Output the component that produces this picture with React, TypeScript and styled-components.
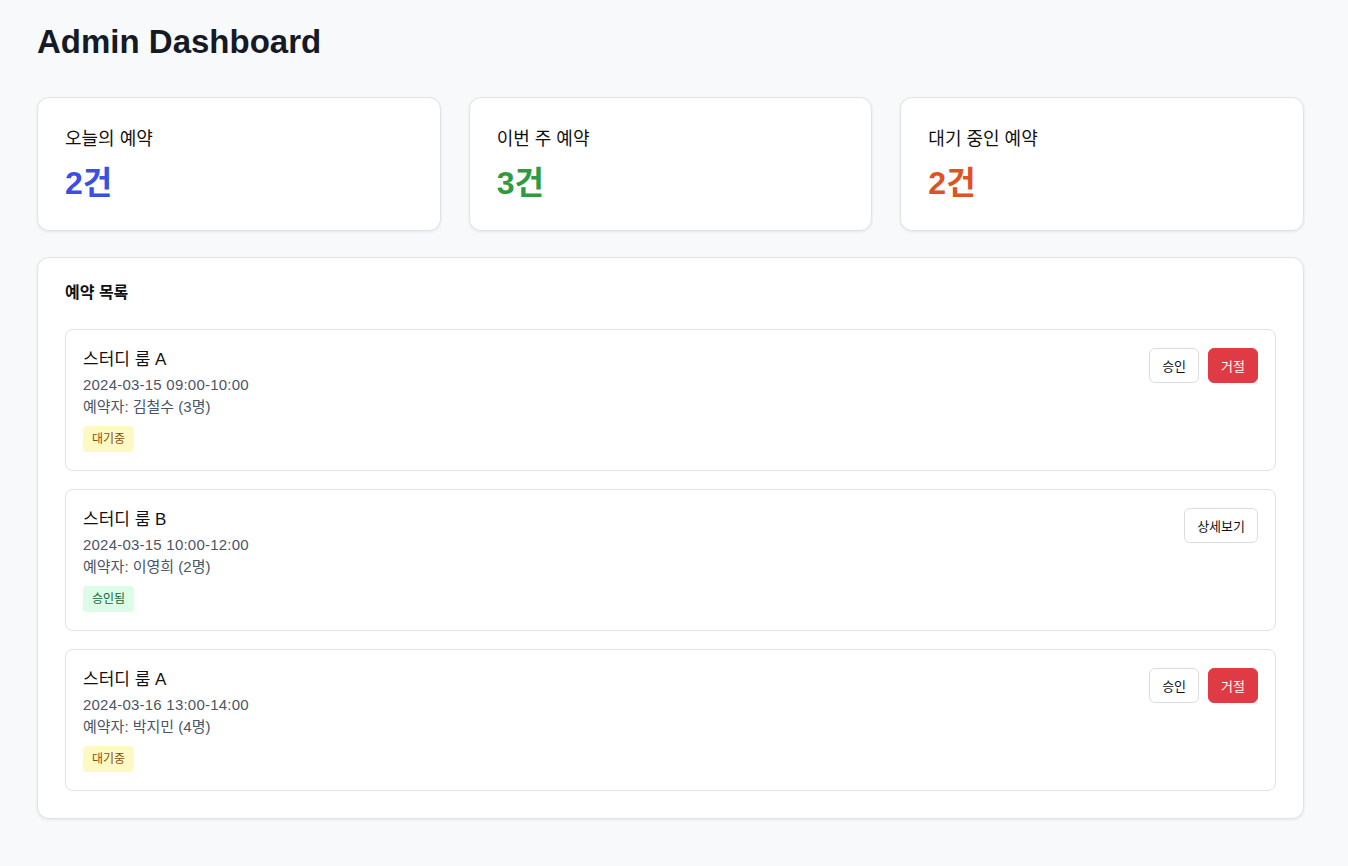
import React from "react";
import styled, { createGlobalStyle } from "styled-components";

const Global = createGlobalStyle`
  html, body { margin: 0; padding: 0; }
  body {
    background: #f8f9fa;
    font-family: "Liberation Sans", "Noto Sans CJK KR", Arial, sans-serif;
    color: #111827;
  }
`;

const Page = styled.div`
  padding: 21px 44px 46px 37px;
`;

const Title = styled.h1`
  margin: 0 0 34px;
  font-size: 33px;
  line-height: 42px;
  font-weight: 700;
  color: #151a26;
`;

const StatGrid = styled.div`
  display: grid;
  grid-template-columns: repeat(3, 1fr);
  gap: 28px;
  margin-bottom: 26px;
`;

const Card = styled.div`
  background: #fff;
  border: 1px solid #e2e2e4;
  border-radius: 12px;
  box-shadow: 0 1px 3px rgba(0, 0, 0, 0.08);
`;

const StatCard = styled(Card)`
  padding: 28px 27px 24px;
`;

const StatLabel = styled.div`
  font-size: 18px;
  line-height: 26px;
  color: #111;
`;

const StatValue = styled.div<{ $color: string }>`
  margin-top: 9px;
  font-size: 32px;
  line-height: 45px;
  font-weight: 700;
  color: ${(p) => p.$color};
`;

const ListPanel = styled(Card)`
  padding: 24px 27px 27px;
`;

const ListTitle = styled.h2`
  margin: 0 0 25px;
  font-size: 16px;
  line-height: 22px;
  font-weight: 600;
  color: #111;
`;

const List = styled.div`
  display: flex;
  flex-direction: column;
  gap: 18px;
`;

const Item = styled.div`
  display: flex;
  justify-content: space-between;
  align-items: flex-start;
  border: 1px solid #e2e2e4;
  border-radius: 8px;
  padding: 18px 17px 18px 17px;
  background: #fff;
`;

const Info = styled.div`
  display: flex;
  flex-direction: column;
`;

const RoomName = styled.div`
  font-size: 17px;
  line-height: 24px;
  margin-bottom: 2px;
  color: #111;
`;

const Meta = styled.div`
  font-size: 15px;
  line-height: 22px;
  color: #4b5563;
`;

const DateText = styled(Meta)`
  letter-spacing: 0.22px;
`;

const Badge = styled.span<{ $tone: "pending" | "approved" }>`
  align-self: flex-start;
  margin-top: 8px;
  height: 26px;
  line-height: 27px;
  padding: 0 9px;
  border-radius: 4px;
  font-size: 12px;
  background: ${(p) => (p.$tone === "pending" ? "#fef9c3" : "#dcfce7")};
  color: ${(p) => (p.$tone === "pending" ? "#854d0e" : "#166534")};
`;

const Actions = styled.div`
  display: flex;
  gap: 9px;
`;

const Button = styled.button<{ $danger?: boolean }>`
  height: 35px;
  padding: 0 12px;
  border-radius: 6px;
  font-family: inherit;
  font-size: 13px;
  cursor: pointer;
  border: 1px solid ${(p) => (p.$danger ? "#e03a45" : "#dcdcdf")};
  background: ${(p) => (p.$danger ? "#e03a45" : "#fff")};
  color: ${(p) => (p.$danger ? "#fff" : "#111")};
`;

type Reservation = {
  room: string;
  time: string;
  who: string;
  status: "pending" | "approved";
};

const reservations: Reservation[] = [
  { room: "스터디 룸 A", time: "2024-03-15 09:00-10:00", who: "예약자: 김철수 (3명)", status: "pending" },
  { room: "스터디 룸 B", time: "2024-03-15 10:00-12:00", who: "예약자: 이영희 (2명)", status: "approved" },
  { room: "스터디 룸 A", time: "2024-03-16 13:00-14:00", who: "예약자: 박지민 (4명)", status: "pending" },
];

const stats = [
  { label: "오늘의 예약", value: "2건", color: "#3b4fe0" },
  { label: "이번 주 예약", value: "3건", color: "#2f9a3f" },
  { label: "대기 중인 예약", value: "2건", color: "#dd5322" },
];

export default function App() {
  return (
    <>
      <Global />
      <Page>
        <Title>Admin Dashboard</Title>
        <StatGrid>
          {stats.map((s) => (
            <StatCard key={s.label}>
              <StatLabel>{s.label}</StatLabel>
              <StatValue $color={s.color}>{s.value}</StatValue>
            </StatCard>
          ))}
        </StatGrid>
        <ListPanel>
          <ListTitle>예약 목록</ListTitle>
          <List>
            {reservations.map((r, i) => (
              <Item key={i}>
                <Info>
                  <RoomName>{r.room}</RoomName>
                  <DateText>{r.time}</DateText>
                  <Meta>{r.who}</Meta>
                  <Badge $tone={r.status}>{r.status === "pending" ? "대기중" : "승인됨"}</Badge>
                </Info>
                <Actions>
                  {r.status === "pending" ? (
                    <>
                      <Button>승인</Button>
                      <Button $danger>거절</Button>
                    </>
                  ) : (
                    <Button>상세보기</Button>
                  )}
                </Actions>
              </Item>
            ))}
          </List>
        </ListPanel>
      </Page>
    </>
  );
}
